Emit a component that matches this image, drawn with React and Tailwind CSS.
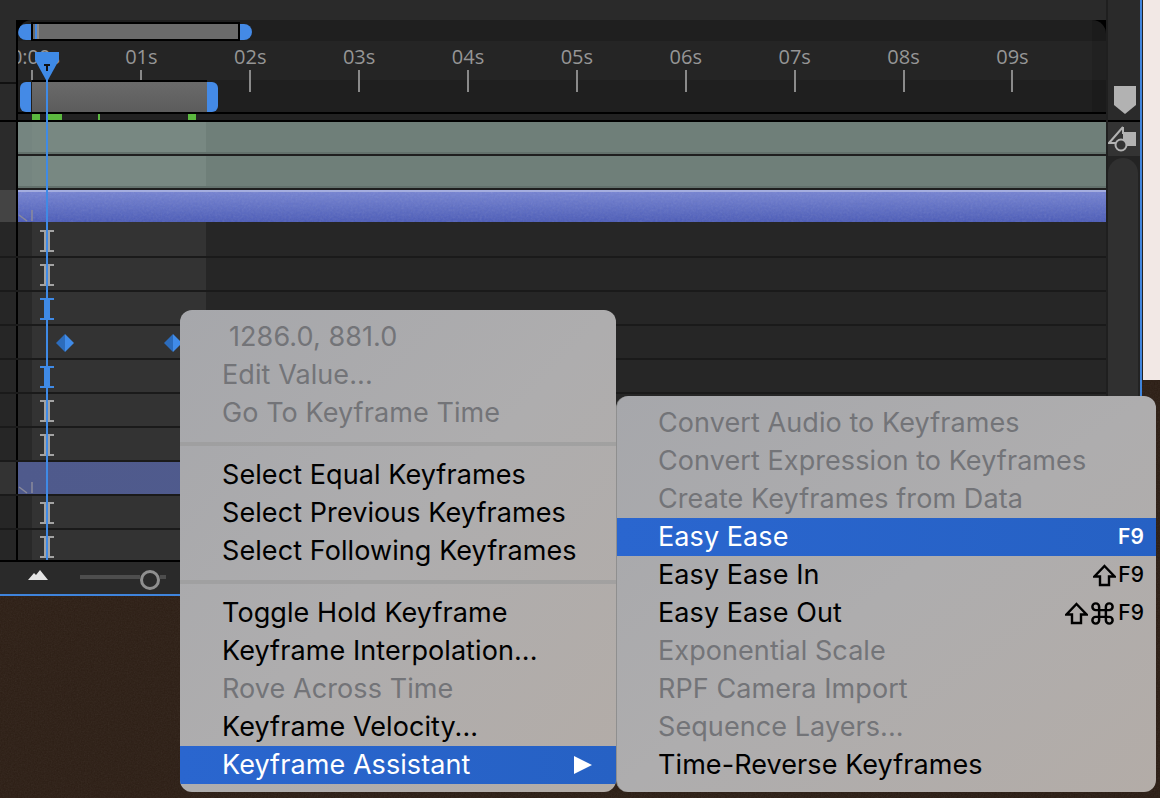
import React from "react";
import { Command } from "lucide-react";

const font = { fontFamily: "Inter, 'Liberation Sans', sans-serif" };

const seconds = ["0:00s", "01s", "02s", "03s", "04s", "05s", "06s", "07s", "08s", "09s"];

const greenMarks = [
  "ml-[14px] w-[8px]",
  "ml-[7px] w-[15px]",
  "ml-[36px] w-[2px]",
  "ml-[88px] w-[8px]",
];

const tracks = [
  { kind: "gray", cell: "pt-[8px]", h: "h-[36px]" },
  { kind: "gray", cell: "pt-[6px]", h: "h-[34px]" },
  { kind: "blue", cell: "pt-[6px]", h: "h-[34px]" },
  { kind: "diamonds", cell: "pt-[8px]", h: "h-[34px]" },
  { kind: "blue", cell: "pt-[6px]", h: "h-[34px]" },
  { kind: "gray", cell: "pt-[6px]", h: "h-[34px]" },
  { kind: "gray", cell: "pt-[6px]", h: "h-[34px]" },
  { kind: "selected", cell: "", h: "h-[34px]" },
  { kind: "gray", cell: "pt-[6px]", h: "h-[34px]" },
  { kind: "gray", cell: "pt-[6px]", h: "h-[32px]", last: true },
];

const mainMenu = [
  { label: "1286.0, 881.0", off: true, indent: true },
  { label: "Edit Value...", off: true },
  { label: "Go To Keyframe Time", off: true },
  { sep: true },
  { label: "Select Equal Keyframes" },
  { label: "Select Previous Keyframes" },
  { label: "Select Following Keyframes" },
  { sep: true },
  { label: "Toggle Hold Keyframe" },
  { label: "Keyframe Interpolation..." },
  { label: "Rove Across Time", off: true },
  { label: "Keyframe Velocity..." },
  { label: "Keyframe Assistant", active: true, arrow: true },
];

const subMenu = [
  { label: "Convert Audio to Keyframes", off: true },
  { label: "Convert Expression to Keyframes", off: true },
  { label: "Create Keyframes from Data", off: true },
  { label: "Easy Ease", active: true, keys: "plain" },
  { label: "Easy Ease In", keys: "shift" },
  { label: "Easy Ease Out", keys: "shiftCmd" },
  { label: "Exponential Scale", off: true },
  { label: "RPF Camera Import", off: true },
  { label: "Sequence Layers...", off: true },
  { label: "Time-Reverse Keyframes" },
];

// grainy overlay for the audio bar and the desktop behind the window
const Noise = ({ id, freq, opacity }) => (
  <svg className="absolute inset-0 h-full w-full" style={{ opacity }}>
    <filter id={id}>
      <feTurbulence type="fractalNoise" baseFrequency={freq} numOctaves="2" />
      <feColorMatrix type="saturate" values="0" />
    </filter>
    <rect width="100%" height="100%" filter={`url(#${id})`} />
  </svg>
);

const ShiftKey = () => (
  <svg width="23" height="23" viewBox="0 0 23 23" fill="none" stroke="currentColor" strokeWidth="2.4">
    <path d="M11.5 2 L21.5 12.5 H16 V21 H7 V12.5 H1.5 Z" />
  </svg>
);

const Keys = ({ type, active }) => (
  <span className={`flex items-center text-[21px] ${active ? "font-semibold" : "font-medium"}`}>
    {type !== "plain" && <ShiftKey />}
    {type === "shiftCmd" && <Command size={27} strokeWidth={2.2} className="ml-[1px]" />}
    <span className="ml-[2px]">F9</span>
  </span>
);

const MenuRow = ({ item, inset }) => {
  if (item.sep) {
    return (
      <div className="flex h-[24px] items-center">
        <div className="h-[4px] w-full bg-[#9b9b9b]/70" />
      </div>
    );
  }
  const tone = item.active
    ? "bg-gradient-to-r from-[#2a66cf] to-[#2661c4] text-white"
    : item.off
      ? "text-[#737478]"
      : "text-black";
  return (
    <div className={`flex h-[38px] items-center justify-between pr-[12px] text-[27px] tracking-[0.08px] ${item.indent ? "pl-[49px]" : inset} ${tone}`}>
      <span className="whitespace-nowrap">{item.label}</span>
      {item.keys && <Keys type={item.keys} active={item.active} />}
      {item.arrow && (
        <svg width="18" height="18" viewBox="0 0 18 18" className="mr-[12px]">
          <polygon points="0,0 18,9 0,18" fill="white" />
        </svg>
      )}
    </div>
  );
};

const Menu = ({ items, inset, className }) => (
  <div
    style={font}
    className={`absolute rounded-[12px] pt-[8px] pb-[8px] overflow-hidden bg-gradient-to-br from-[#a6a7ab] via-[#aeadae] to-[#b3aca7] ${className}`}
  >
    {items.map((item, i) => (
      <MenuRow key={i} item={item} inset={inset} />
    ))}
  </div>
);

const Beam = ({ blue }) => (
  <div className="flex h-[22px] w-[14px] flex-col items-center">
    <div className={`h-[2px] w-[14px] ${blue ? "bg-[#3f8ae6]" : "bg-[#a3a3a3]"}`} />
    <div className={`h-[18px] w-[6px] ${blue ? "bg-[#3f8ae6]" : "border-x-2 border-[#a3a3a3]"}`} />
    <div className={`h-[2px] w-[14px] ${blue ? "bg-[#3f8ae6]" : "bg-[#a3a3a3]"}`} />
  </div>
);

const Diamond = ({ className }) => (
  <svg width="18" height="18" viewBox="0 0 18 18" className={className}>
    <polygon points="9,0 9,18 0,9" fill="#2c6cbc" />
    <polygon points="9,0 18,9 9,18" fill="#408be8" />
  </svg>
);

const Tick = () => (
  <svg width="15" height="12" viewBox="0 0 15 12" className="absolute bottom-0 left-0" fill="none" stroke="#8a8a9a" strokeWidth="1.5">
    <path d="M14 0 V11 M1 5 L9 11" />
  </svg>
);

const Track = ({ row }) => (
  <div className={`flex ${row.h} border-b-2 ${row.last ? "border-black" : "border-[#1a1a1a]"}`}>
    <div className={`w-[16px] ${row.kind === "selected" ? "bg-[#333333]" : "bg-[#262626]"}`} />
    <div className="w-[2px] bg-black" />
    {row.kind === "selected" ? (
      <div className="relative flex-1 bg-gradient-to-r from-[#4f5a8c] to-[#525e93]">
        <Tick />
      </div>
    ) : (
      <>
        <div className="w-[14px] bg-[#292929]" />
        <div className={`flex w-[174px] bg-[#333333] ${row.cell} ${row.kind === "diamonds" ? "pl-[24px]" : "pl-[8px]"}`}>
          {row.kind === "diamonds" ? (
            <>
              <Diamond />
              <Diamond className="ml-[90px]" />
            </>
          ) : (
            <Beam blue={row.kind === "blue"} />
          )}
        </div>
        <div className="flex-1 bg-[#262626]" />
      </>
    )}
  </div>
);

const Ruler = () => (
  <div className="ml-[-40px] flex h-[51px]">
    {seconds.map((s, i) => (
      <div key={s} className="flex w-[108.9px] shrink-0 flex-col items-center">
        <span
          className={`h-[29px] pt-[3px] text-[20px] leading-[26px] text-[#969696] ${i === 0 ? "pl-[6px]" : ""}`}
          style={{ fontFamily: "'Open Sans', sans-serif" }}
        >
          {s}
        </span>
        <div className={`w-[2px] bg-[#8a8a8a] ${i < 2 ? "h-[10px]" : "h-[22px]"}`} />
      </div>
    ))}
  </div>
);

const Header = () => (
  <div className="flex h-[100px]">
    <div className="flex w-[16px] flex-col bg-[#2a2a2a]">
      <div className="h-[62px]" />
      <div className="h-[2px] bg-[#111111]" />
    </div>
    <div className="flex-1 bg-black pl-[2px]">
      <div className="relative h-full overflow-hidden rounded-t-[14px] bg-[#1f1f1f]">
        <div className="absolute inset-x-0 top-[21px] h-[39px] bg-[#252525]" />
        <div className="absolute inset-y-0 right-0 w-[14px] bg-black/10" />
        {/* navigator */}
        <div className="relative flex h-[21px] items-end">
          <div className="mb-[1px] h-[16px] w-[13px] rounded-l-[8px] bg-[#448ae6]" />
          <div className="relative h-[19px] w-[209px] border-2 border-black bg-[#6b6b6b]">
            <div className="absolute top-0 left-[2px] h-full w-[2px] bg-[#448ae6]" />
            <div className="absolute top-0 left-[4px] h-full w-[2px] bg-[#8a8a8a]" />
          </div>
          <div className="mb-[1px] h-[16px] w-[12px] rounded-r-[8px] bg-[#448ae6]" />
        </div>
        <div className="relative">
          <Ruler />
        </div>
        {/* work area bar */}
        <div className="absolute top-[60px] left-[2px] flex h-[32px]">
          <div className="mt-[2px] w-[11px] rounded-l-[6px] bg-[#448ae6]" />
          <div className="ml-[1px] h-[32px] w-[175px] border-t-2 border-black bg-gradient-to-b from-[#6a6a6a] to-[#5c5c5c]" />
          <div className="mt-[2px] w-[11px] rounded-r-[6px] bg-[#448ae6]" />
        </div>
        <div className="absolute inset-x-0 top-[92px] h-[2px] bg-black" />
        <div className="absolute inset-x-0 top-[94px] flex h-[6px] bg-[#222222]">
          {greenMarks.map((c) => (
            <div key={c} className={`${c} bg-[#5bb83f]`} />
          ))}
        </div>
      </div>
    </div>
  </div>
);

const LayerBar = () => (
  <div className="flex h-[34px]">
    <div className="w-[16px] bg-[#2b2b2b]" />
    <div className="w-[2px] bg-black" />
    <div className="flex flex-1 flex-col">
      <div className="flex h-[30px]">
        <div className="w-[14px] bg-[#758580]" />
        <div className="w-[174px] bg-[#788882]" />
        <div className="flex-1 bg-[#6f7f79]" />
      </div>
      <div className="h-[2px] bg-[#63716c]" />
      <div className="h-[2px] bg-[#1f1f1f]" />
    </div>
  </div>
);

const SidePanel = () => (
  <div className="flex w-[32px] flex-col bg-[#2a2a2a]">
    <div className="h-[86px] shrink-0" />
    <div className="ml-[6px] h-[28px] w-[22px] shrink-0">
      <svg width="22" height="28" viewBox="0 0 22 28">
        <polygon points="0,0 22,0 22,19 11,28 0,19" fill="#b2b2b2" />
      </svg>
    </div>
    <div className="h-[6px] shrink-0" />
    <div className="h-[2px] shrink-0 bg-black" />
    <div className="h-[34px] shrink-0 bg-[#333333]">
      <svg width="32" height="34" viewBox="0 0 32 34" fill="none" stroke="#b2b2b2" strokeWidth="2">
        <rect x="15" y="10" width="13" height="14" fill="#b2b2b2" stroke="none" />
        <path d="M15 5 L1 21 H8" />
        <path d="M15 5 V12" />
        <circle cx="13" cy="23" r="5.5" fill="#333333" />
      </svg>
    </div>
    <div className="flex-1 bg-[#232323] pt-[2px]">
      <div className="h-full w-[30px] rounded-t-[15px] bg-[#303030]" />
    </div>
  </div>
);

const BottomBar = () => (
  <div className="flex h-[32px] bg-[#2a2a2a] pl-[28px]">
    <svg width="20" height="10" viewBox="0 0 20 10" className="mt-[8px]">
      <polygon points="0,10 6,3 8,5 12,0 20,10" fill="#e4e4e4" />
    </svg>
    <div className="mt-[8px] ml-[32px] flex h-[20px] w-[86px] items-start">
      <div className="mt-[5px] h-[4px] w-[60px] bg-[#4d4d4d]" />
      <div className="h-[20px] w-[20px] shrink-0 rounded-full border-[3px] border-[#8f8f8f]" />
      <div className="mt-[5px] h-[4px] w-[6px] bg-[#4d4d4d]" />
    </div>
  </div>
);

const Playhead = () => (
  <div className="absolute top-[52px] left-[35px] flex h-[508px] w-[24px] flex-col items-center">
    <svg width="24" height="28" viewBox="0 0 24 28" className="shrink-0">
      <polygon points="0,0 24,0 24,8 13,28 11,28 0,8" fill="#3f8ae6" />
      <path d="M9 13 H15 M12 13 V19" stroke="#111" strokeWidth="2" />
    </svg>
    <div className="w-[2px] flex-1 bg-[#3f8ae6]" />
  </div>
);

export default function App() {
  return (
    <div className="relative h-[798px] w-[1160px] overflow-hidden bg-gradient-to-br from-[#2e1f15] to-[#2a1c13]">
      <Noise id="desk" freq="0.7" opacity={0.08} />
      <div className="relative flex h-[596px]">
        <div className="relative h-full w-[1142px] border-r-2 border-b-2 border-[#3f84dc] bg-[#2a2a2a]">
          <div className="flex h-[562px]">
            <div className="flex w-[1108px] flex-col bg-[#1f1f1f] pr-[2px]">
              <div className="h-[20px] shrink-0 bg-[#2a2a2a]" />
              <Header />
              <div className="h-[2px] shrink-0 bg-black" />
              <LayerBar />
              <LayerBar />
              <div className="flex h-[32px]">
                <div className="w-[16px] bg-[#444444]" />
                <div className="w-[2px] bg-black" />
                <div className="relative flex-1 overflow-hidden border-t-2 border-[#a4addf] bg-gradient-to-b from-[#7482d2] to-[#4b5bb8]">
                  <Noise id="audio" freq="0.45" opacity={0.14} />
                  <Tick />
                </div>
              </div>
              {tracks.map((row, i) => (
                <Track key={i} row={row} />
              ))}
            </div>
            <SidePanel />
          </div>
          <BottomBar />
          <Playhead />
        </div>
        <div className="h-[380px] flex-1 border-l border-[#222222] bg-[#f2e8e5]" />
      </div>

      <Menu items={mainMenu} inset="pl-[42px]" className="top-[310px] left-[180px] w-[436px]" />
      <Menu items={subMenu} inset="pl-[41px]" className="top-[396px] left-[616px] w-[540px] border-l border-[#8f8f8f]" />
    </div>
  );
}
